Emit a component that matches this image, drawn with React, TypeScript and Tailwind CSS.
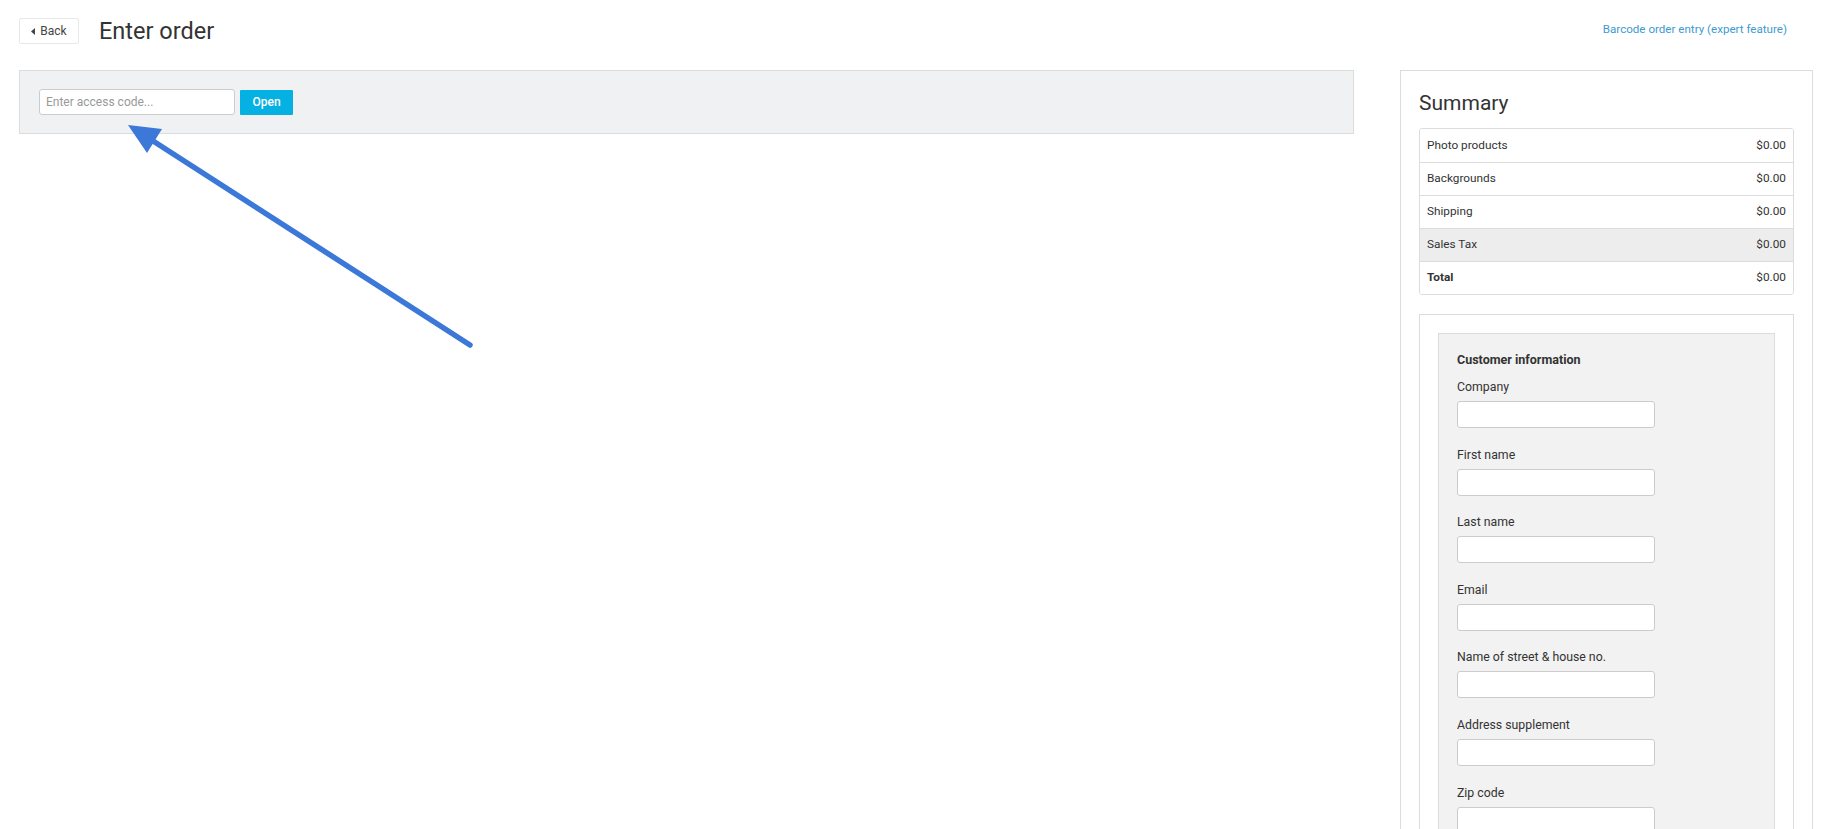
import { useState } from "react";

const summaryRows = [
  { label: "Photo products", value: "$0.00" },
  { label: "Backgrounds", value: "$0.00" },
  { label: "Shipping", value: "$0.00" },
  { label: "Sales Tax", value: "$0.00", shaded: true },
  { label: "Total", value: "$0.00", bold: true },
];

const customerFields = [
  "Company",
  "First name",
  "Last name",
  "Email",
  "Name of street & house no.",
  "Address supplement",
  "Zip code",
  "City",
];

const App = () => {
  // Zugangscode
  const [accessCode, setAccessCode] = useState("");

  return (
    <div className="relative min-h-screen bg-white pl-[19px] pr-[14px] font-['Roboto',sans-serif] text-[#333]">
      {/* Kopfzeile */}
      <div className="flex h-[70px] items-start pt-[18px]">
        <button className="flex h-[26px] w-[60px] items-center justify-center gap-[5px] rounded-[2px] border border-[#e8e8e8] bg-white text-[12px] text-[#444]">
          <svg width="4" height="7" viewBox="0 0 4 7">
            <path d="M4 0 L0 3.5 L4 7 Z" fill="#444" />
          </svg>
          Back
        </button>
        <h1 className="ml-[20px] text-[23.5px] leading-[26px] font-normal">Enter order</h1>
        <a href="#" className="ml-auto mr-[26px] pt-[3px] text-[11.6px] leading-[17px] text-[#3d9ad1]">
          Barcode order entry (expert feature)
        </a>
      </div>

      <div className="flex items-start gap-[46px]">
        {/* Zugangscode */}
        <div className="flex flex-1 items-center gap-[5px] border border-[#dcdcdc] bg-[#f0f1f3] px-[19px] py-[18px]">
          <input
            className="h-[26px] w-[196px] rounded-[3px] border border-[#ccc] bg-white px-[6px] text-[12px] placeholder-[#999] outline-none"
            placeholder="Enter access code..."
            value={accessCode}
            onChange={(event) => setAccessCode(event.target.value)}
          />
          <button className="h-[25px] w-[53px] rounded-[1px] bg-[#05b0e3] text-[12px] font-medium text-white">
            Open
          </button>
        </div>

        {/* Zusammenfassung */}
        <div className="w-[413px] border border-[#dcdcdc] px-[18px] pt-[20px] pb-[18px]">
          <h2 className="text-[21px] leading-[24px] font-normal">Summary</h2>

          <div className="mt-[13px] overflow-hidden rounded-[3px] border border-[#dcdcdc]">
            {summaryRows.map((row, index) => (
              <div
                key={row.label}
                className={`flex h-[33px] items-center justify-between px-[7px] text-[11.8px] ${
                  index > 0 ? "border-t border-[#dcdcdc]" : ""
                } ${row.shaded ? "bg-[#ededed]" : "bg-white"}`}
              >
                <span className={row.bold ? "font-bold" : ""}>{row.label}</span>
                <span>{row.value}</span>
              </div>
            ))}
          </div>

          <div className="mt-[19px] border border-[#dcdcdc] p-[18px]">
            <div className="border border-[#dcdcdc] bg-[#f2f2f2] px-[18px] pt-[17px] pb-[20px]">
              <h3 className="text-[12.5px] leading-[18px] font-bold">Customer information</h3>
              <div className="mt-[9px] flex flex-col gap-[17.6px]">
                {customerFields.map((field) => (
                  <label key={field} className="flex flex-col">
                    <span className="mb-[5px] text-[12.3px] leading-[18px]">{field}</span>
                    <input className="h-[27px] w-[198px] rounded-[3px] border border-[#ccc] bg-white px-[6px] text-[12px] outline-none" />
                  </label>
                ))}
              </div>
            </div>
          </div>
        </div>
      </div>

      {/* Hinweispfeil */}
      <svg className="pointer-events-none absolute left-0 top-0" width="500" height="360" viewBox="0 0 500 360">
        <line x1="150" y1="139" x2="470" y2="345" stroke="#3c78d8" strokeWidth="5.5" strokeLinecap="round" />
        <polygon points="128,125 162,129 147,153" fill="#3c78d8" />
      </svg>
    </div>
  );
};

export default App;
